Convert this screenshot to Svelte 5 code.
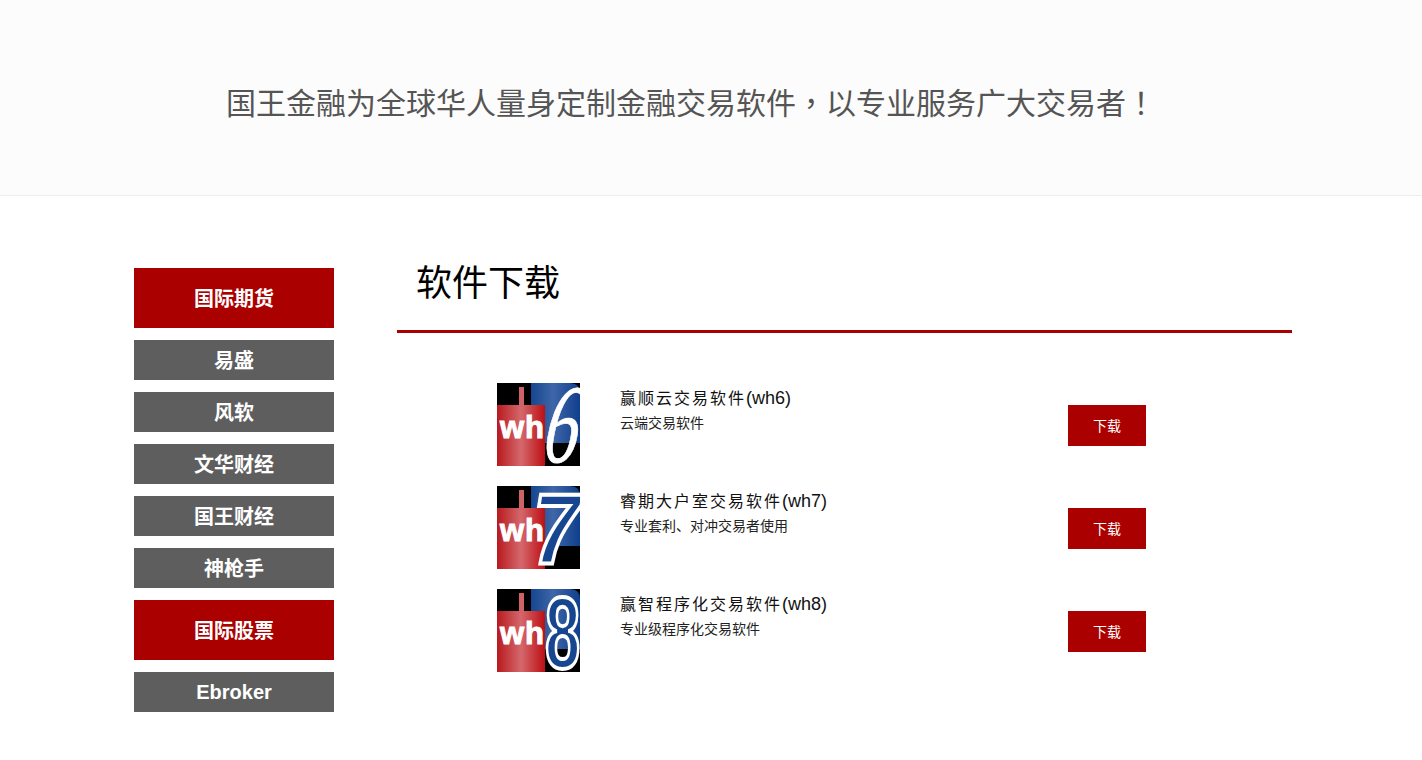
<script>
  const topMenu = [
    { label: '国际期货', main: true },
    { label: '易盛' },
    { label: '风软' },
    { label: '文华财经' },
    { label: '国王财经' },
    { label: '神枪手' },
    { label: '国际股票', main: true },
    { label: 'Ebroker', latin: true }
  ];

  const products = [
    { num: '6', name: '赢顺云交易软件', code: '(wh6)', desc: '云端交易软件' },
    { num: '7', name: '睿期大户室交易软件', code: '(wh7)', desc: '专业套利、对冲交易者使用' },
    { num: '8', name: '赢智程序化交易软件', code: '(wh8)', desc: '专业级程序化交易软件' }
  ];
</script>

<header class="banner">
  <h1>国王金融为全球华人量身定制金融交易软件<span class="punct">，</span>以专业服务广大交易者<span class="punct">！</span></h1>
</header>

<div class="page">
  <nav class="side">
    {#each topMenu as item}
      <a class="side-item" class:main={item.main} class:latin={item.latin} href="#top">{item.label}</a>
    {/each}
  </nav>

  <main class="content">
    <h2>软件下载</h2>
    <ul class="list">
      {#each products as p}
        <li class="row">
          <svg class="logo" viewBox="0 0 83 83" width="83" height="83" aria-hidden="true">
            <defs>
              <linearGradient id="red{p.num}" x1="0" x2="1" y1="0" y2="0">
                <stop offset="0" stop-color="#b81a1e" />
                <stop offset="0.5" stop-color="#d4686c" />
                <stop offset="1" stop-color="#bd0f14" />
              </linearGradient>
              <linearGradient id="blue{p.num}" x1="0" x2="1" y1="0" y2="0">
                <stop offset="0" stop-color="#15468f" />
                <stop offset="0.45" stop-color="#3f66a8" />
                <stop offset="1" stop-color="#0f3f8c" />
              </linearGradient>
            </defs>
            <rect width="83" height="83" fill="#000" />
            <path d="M34 0H73Q83 0 83 10V60H34Z" fill="url(#blue{p.num})" />
            <rect x="0" y="22" width="48" height="61" fill="url(#red{p.num})" />
            <rect x="22" y="4" width="5" height="20" fill="#cf6266" />
            <text class="wh" x="3" y="55">wh</text>
            {#if p.num === '6'}
              <text class="num six" transform="translate(44 79) skewX(-9) scale(.62 1)">6</text>
            {:else if p.num === '7'}
              <text class="num seven" transform="translate(36 78) scale(.84 1)">7</text>
            {:else}
              <text class="num eight" transform="translate(48 79) scale(.62 1)">8</text>
            {/if}
          </svg>
          <div class="info">
            <div class="name"><span class="cn">{p.name}</span>{p.code}</div>
            <div class="desc">{p.desc}</div>
          </div>
          <a class="dl" href="#top">下载</a>
        </li>
      {/each}
    </ul>
  </main>
</div>

<style>
  :global(body) {
    margin: 0;
    background: #fff;
    font-family: "Liberation Sans", "Noto Sans CJK SC", sans-serif;
  }

  .banner {
    height: 195px;
    background: #fcfcfc;
    border-bottom: 1px solid #eeeeee;
    padding-left: 226px;
    display: flex;
    align-items: center;
  }

  .banner h1 {
    margin: 9px 0 0;
    font-size: 30px;
    font-weight: 400;
    color: #555;
    line-height: 40px;
  }

  .punct {
    font-family: "Noto Sans CJK TC", sans-serif;
  }

  .page {
    display: flex;
    padding: 72px 130px 48px 134px;
    gap: 63px;
  }

  .side {
    width: 200px;
    flex: none;
    display: flex;
    flex-direction: column;
    gap: 12px;
  }

  .side-item {
    height: 40px;
    line-height: 42px;
    background: #5e5e5e;
    color: #fff;
    text-align: center;
    font-size: 20px;
    font-weight: 700;
    text-decoration: none;
  }

  .side-item.main {
    height: 60px;
    line-height: 62px;
    background: #a00;
  }

  .side-item.latin {
    line-height: 40px;
  }

  .content {
    flex: 1;
    min-width: 0;
  }

  h2 {
    margin: 0;
    padding: 0 19px;
    height: 62px;
    line-height: 32px;
    font-size: 36px;
    font-weight: 400;
    color: #000;
    border-bottom: 3px solid #a00;
  }

  .list {
    list-style: none;
    margin: 50px 0 0;
    padding: 0 0 0 100px;
    display: flex;
    flex-direction: column;
    gap: 20px;
  }

  .row {
    display: flex;
    height: 83px;
  }

  .logo {
    flex: none;
    display: block;
  }

  .wh {
    font-family: "Liberation Sans", sans-serif;
    font-weight: 700;
    font-size: 31px;
    fill: #fff;
    stroke: #fff;
    stroke-width: 1;
    letter-spacing: 1px;
  }

  .num {
    fill: #fff;
  }

  .six {
    font-family: "Liberation Serif", serif;
    font-style: italic;
    font-size: 112px;
    stroke: #fff;
    stroke-width: 0.8;
  }

  .seven {
    font-family: "Liberation Sans", sans-serif;
    font-style: italic;
    font-weight: 700;
    font-size: 100px;
    fill: #15468f;
    stroke: #fff;
    stroke-width: 4;
  }

  .eight {
    font-family: "Liberation Sans", sans-serif;
    font-weight: 700;
    font-size: 102px;
    fill: #15468f;
    stroke: #fff;
    stroke-width: 4;
  }

  .info {
    margin-left: 40px;
    width: 448px;
    padding-top: 4px;
  }

  .name {
    font-size: 18px;
    line-height: 22px;
    color: #111;
  }

  .cn {
    font-size: 16px;
    letter-spacing: 2px;
  }

  .desc {
    font-size: 14px;
    line-height: 20px;
    margin-top: 3px;
    color: #222;
  }

  .dl {
    align-self: flex-start;
    margin-top: 22px;
    width: 78px;
    height: 41px;
    line-height: 42px;
    text-align: center;
    background: #a00;
    color: #fff;
    font-size: 14px;
    text-decoration: none;
  }
</style>
